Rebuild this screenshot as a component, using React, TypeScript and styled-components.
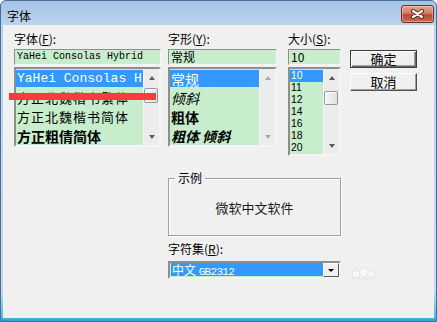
import React from "react";
import styled, { createGlobalStyle } from "styled-components";

const UI = `"Noto Sans CJK SC", "Liberation Sans", sans-serif`;
const MONO = `"Liberation Mono", "Noto Sans CJK SC", monospace`;

const GlobalStyle = createGlobalStyle`
  html, body { margin: 0; padding: 0; background: #fff; }
  body { font-family: ${UI}; font-size: 12px; color: #000; }
  * { box-sizing: border-box; }
`;

const Window = styled.div`
  position: relative;
  width: 437px;
  height: 322px;
  border: 1px solid #4b6f96;
  border-radius: 6px 6px 0 0;
  background: linear-gradient(180deg, #a6c3e6 0px, #bad2ec 22px, #c4d9ef 290px, #46bde8 316px, #2b9fd0 320px);
  display: flex;
  flex-direction: column;
  overflow: hidden;
`;

const TitleBar = styled.div`
  height: 24px;
  flex: none;
  display: flex;
  align-items: flex-start;
  justify-content: space-between;
  padding: 0 2px 0 6px;
`;

const Title = styled.span`
  font-size: 12px;
  line-height: 14px;
  margin-top: 8px;
`;

const CloseButton = styled.div`
  width: 33px;
  height: 18px;
  margin-top: 4px;
  border: 1px solid #6a2f2c;
  border-radius: 3px;
  background: linear-gradient(180deg, #e6a392 0%, #d57d68 45%, #c2462f 55%, #cd6a53 100%);
  box-shadow: inset 0 0 0 1px rgba(255, 255, 255, 0.35);
  display: flex;
  align-items: center;
  justify-content: center;
`;

const Client = styled.div`
  flex: 1;
  margin: 0 2px 3px 2px;
  background: #f0f0f0;
  padding: 6px 0 0 11px;
  display: flex;
  flex-direction: column;
`;

const TopRow = styled.div`
  display: flex;
  align-items: flex-start;
`;

const Column = styled.div<{ $w: number; $gap: number }>`
  width: ${(p) => p.$w}px;
  margin-right: ${(p) => p.$gap}px;
  display: flex;
  flex-direction: column;
`;

const Label = styled.div`
  height: 16px;
  line-height: 16px;
  font-size: 12px;
  white-space: nowrap;
  margin-bottom: 2px;
`;

const Field = styled.div<{ $mono?: boolean }>`
  height: 16px;
  border: 1px solid;
  border-color: #8e8e8e #f4f4f4 #f4f4f4 #8e8e8e;
  background: #c7edcc;
  padding-left: 2px;
  font-family: ${(p) => (p.$mono ? MONO : UI)};
  font-size: ${(p) => (p.$mono ? 10 : 12)}px;
  line-height: 14px;
  white-space: nowrap;
  overflow: hidden;
  margin-bottom: 2px;
`;

const ListBox = styled.div<{ $h: number }>`
  height: ${(p) => p.$h}px;
  border: 2px solid;
  border-color: #8e8e8e #f4f4f4 #f4f4f4 #8e8e8e;
  background: #c7edcc;
  display: flex;
`;

const Items = styled.div`
  flex: 1;
  min-width: 0;
  overflow: hidden;
  padding-top: 1px;
  display: flex;
  flex-direction: column;
`;

const Item = styled.div<{
  $h: number;
  $gap: number;
  $size: number;
  $selected?: boolean;
  $mono?: boolean;
  $bold?: boolean;
  $italic?: boolean;
  $spacing?: number;
}>`
  flex: none;
  height: ${(p) => p.$h}px;
  display: flex;
  align-items: center;
  line-height: 1;
  margin-bottom: ${(p) => p.$gap}px;
  padding-left: 1px;
  font-family: ${(p) => (p.$mono ? MONO : UI)};
  font-size: ${(p) => p.$size}px;
  font-weight: ${(p) => (p.$bold ? 700 : 400)};
  font-style: ${(p) => (p.$italic ? "italic" : "normal")};
  letter-spacing: ${(p) => p.$spacing ?? 0}px;
  background: ${(p) => (p.$selected ? "#3399ff" : "transparent")};
  color: ${(p) => (p.$selected ? "#fff" : "#000")};
  white-space: nowrap;
`;

const SizeItem = styled(Item)`
  font-family: "Liberation Sans", sans-serif;
`;

const Track = styled.div`
  width: 16px;
  flex: none;
  background: #ececec;
  border-left: 1px solid #f8f8f8;
  display: flex;
  flex-direction: column;
`;

const ArrowButton = styled.div<{ $down?: boolean; $disabled?: boolean }>`
  height: 17px;
  flex: none;
  display: flex;
  align-items: center;
  justify-content: center;
  &::after {
    content: "";
    width: 0;
    height: 0;
    border-left: 3.5px solid transparent;
    border-right: 3.5px solid transparent;
    ${(p) =>
      p.$down
        ? `border-top: 4px solid ${p.$disabled ? "#a8a8a8" : "#5a5a5a"};`
        : `border-bottom: 4px solid ${p.$disabled ? "#a8a8a8" : "#5a5a5a"};`}
  }
`;

const Thumb = styled.div<{ $top: number; $h: number }>`
  margin: ${(p) => p.$top}px 1px 0 0;
  height: ${(p) => p.$h}px;
  border: 1px solid #979797;
  border-radius: 2px;
  background: linear-gradient(90deg, #f6f6f6, #e2e2e2);
  box-shadow: inset 1px 1px 0 #fff;
`;

const Spacer = styled.div`
  flex: 1;
`;

const ButtonColumn = styled.div`
  width: 67px;
  padding-top: 19px;
  display: flex;
  flex-direction: column;
  gap: 5px;
`;

const DialogButton = styled.div<{ $default?: boolean }>`
  height: 18px;
  border: 1px solid ${(p) => (p.$default ? "#3c3c3c" : "#f8f8f8")};
  ${(p) => (p.$default ? "" : "border-color: #fff #505050 #505050 #fff;")}
  background: #f0f0f0;
  box-shadow: ${(p) =>
    p.$default
      ? "inset 1px 1px 0 #fff, inset -1px -1px 0 #6a6a6a, inset -2px -2px 0 #a0a0a0"
      : "inset -1px -1px 0 #a0a0a0"};
  font-size: 13px;
  line-height: 16px;
  text-align: center;
`;

const Bottom = styled.div`
  margin: 15px 0 0 154px;
  display: flex;
  flex-direction: column;
  width: 260px;
`;

const Group = styled.fieldset`
  width: 173px;
  height: 65px;
  margin: 0;
  padding: 0;
  border: 1px solid #a0a0a0;
  box-shadow: inset 1px 1px 0 #fff, 1px 1px 0 #fff;
  text-align: center;
`;

const Legend = styled.legend`
  margin-left: 6px;
  padding: 0 3px;
  font-size: 12px;
  line-height: 14px;
  text-align: left;
`;

const SampleText = styled.div`
  font-size: 13px;
  line-height: 14px;
  color: #1a1a1a;
  margin-top: 16px;
`;

const CharsetLabel = styled(Label)`
  margin: 5px 0 4px;
`;

const ComboRow = styled.div`
  display: flex;
  align-items: center;
`;

const Combo = styled.div`
  width: 173px;
  height: 18px;
  border: 2px solid;
  border-color: #8e8e8e #f4f4f4 #f4f4f4 #8e8e8e;
  background: #c7edcc;
  display: flex;
`;

const Selection = styled.div`
  flex: 1;
  margin: 0 0 1px 1px;
  background: #3399ff;
  color: #fff;
  font-size: 12px;
  line-height: 13px;
  padding-left: 1px;
  white-space: nowrap;
`;

const LatinPart = styled.span`
  font-family: ${MONO};
  font-size: 11px;
  letter-spacing: -0.7px;
`;

const DropButton = styled.div`
  width: 16px;
  flex: none;
  background: #f0f0f0;
  border: 1px solid;
  border-color: #fff #5a5a5a #5a5a5a #fff;
  display: flex;
  align-items: center;
  justify-content: center;
  &::after {
    content: "";
    border-left: 3px solid transparent;
    border-right: 3px solid transparent;
    border-top: 3px solid #000;
  }
`;

const Watermark = styled.svg`
  margin-left: 7px;
  margin-top: 6px;
`;

const RedMark = styled.div`
  position: absolute;
  left: 8px;
  top: 92px;
  width: 147px;
  height: 7px;
  background: #fd3b3f;
`;

type Scroll = { thumbTop?: number; thumbH?: number; disabled?: boolean };

function ScrollBar({ thumbTop, thumbH, disabled }: Scroll) {
  return (
    <Track>
      <ArrowButton $disabled={disabled} />
      {thumbH ? <Thumb $top={thumbTop ?? 0} $h={thumbH} /> : null}
      <Spacer />
      <ArrowButton $down $disabled={disabled} />
    </Track>
  );
}

const fontItems = [
  { text: "YaHei Consolas H", mono: true, size: 13, selected: true, spacing: 0 },
  { text: "方正北魏楷书繁体", size: 13, spacing: 1 },
  { text: "方正北魏楷书简体", size: 13, spacing: 1 },
  { text: "方正粗倩简体", size: 14, bold: true, spacing: 0 },
];

const styleItems = [
  { text: "常规", selected: true },
  { text: "倾斜", italic: true },
  { text: "粗体", bold: true },
  { text: "粗体 倾斜", bold: true, italic: true },
];

const sizes = ["10", "11", "12", "14", "16", "18", "20"];

export default function App() {
  return (
    <>
      <GlobalStyle />
      <Window>
        <TitleBar>
          <Title>字体</Title>
          <CloseButton>
            <svg width="13" height="10" viewBox="0 0 13 10">
              <path d="M2 2 L11 8 M11 2 L2 8" stroke="#4a2422" strokeWidth="4" strokeLinecap="round" />
              <path d="M2 2 L11 8 M11 2 L2 8" stroke="#fff" strokeWidth="2.2" strokeLinecap="round" />
            </svg>
          </CloseButton>
        </TitleBar>
        <Client>
          <TopRow>
            <Column $w={147} $gap={7}>
              <Label>
                字体(<u>F</u>):
              </Label>
              <Field $mono>YaHei Consolas Hybrid</Field>
              <ListBox $h={80}>
                <Items>
                  {fontItems.map((f) => (
                    <Item
                      key={f.text}
                      $h={17}
                      $gap={2}
                      $size={f.size}
                      $mono={f.mono}
                      $bold={f.bold}
                      $spacing={f.spacing}
                      $selected={f.selected}
                    >
                      {f.text}
                    </Item>
                  ))}
                </Items>
                <ScrollBar thumbTop={2} thumbH={15} />
              </ListBox>
            </Column>
            <Column $w={109} $gap={11}>
              <Label>
                字形(<u>Y</u>):
              </Label>
              <Field>常规</Field>
              <ListBox $h={80}>
                <Items>
                  {styleItems.map((s) => (
                    <Item
                      key={s.text}
                      $h={17}
                      $gap={2}
                      $size={14}
                      $bold={s.bold}
                      $italic={s.italic}
                      $selected={s.selected}
                    >
                      {s.text}
                    </Item>
                  ))}
                </Items>
                <ScrollBar disabled />
              </ListBox>
            </Column>
            <Column $w={53} $gap={9}>
              <Label>
                大小(<u>S</u>):
              </Label>
              <Field>10</Field>
              <ListBox $h={89}>
                <Items>
                  {sizes.map((s, i) => (
                    <SizeItem key={s} $h={12} $gap={0} $size={10.4} $selected={i === 0}>
                      {s}
                    </SizeItem>
                  ))}
                </Items>
                <ScrollBar thumbTop={5} thumbH={14} />
              </ListBox>
            </Column>
            <ButtonColumn>
              <DialogButton $default>确定</DialogButton>
              <DialogButton>取消</DialogButton>
            </ButtonColumn>
          </TopRow>
          <Bottom>
            <Group>
              <Legend>示例</Legend>
              <SampleText>微软中文软件</SampleText>
            </Group>
            <CharsetLabel>
              字符集(<u>R</u>):
            </CharsetLabel>
            <ComboRow>
              <Combo>
                <Selection>
                  中文 <LatinPart>GB2312</LatinPart>
                </Selection>
                <DropButton />
              </Combo>
              <Watermark width="30" height="12" viewBox="0 0 30 12">
                <circle cx="8" cy="7" r="4" fill="#f8f8f8" stroke="#e4e4e4" />
                <circle cx="16" cy="5.5" r="4.5" fill="#f8f8f8" stroke="#e4e4e4" />
                <circle cx="23" cy="7" r="3.5" fill="#f8f8f8" stroke="#e4e4e4" />
                <path d="M2 11.5 H29" stroke="#e8e8e8" />
              </Watermark>
            </ComboRow>
          </Bottom>
        </Client>
        <RedMark />
      </Window>
    </>
  );
}
